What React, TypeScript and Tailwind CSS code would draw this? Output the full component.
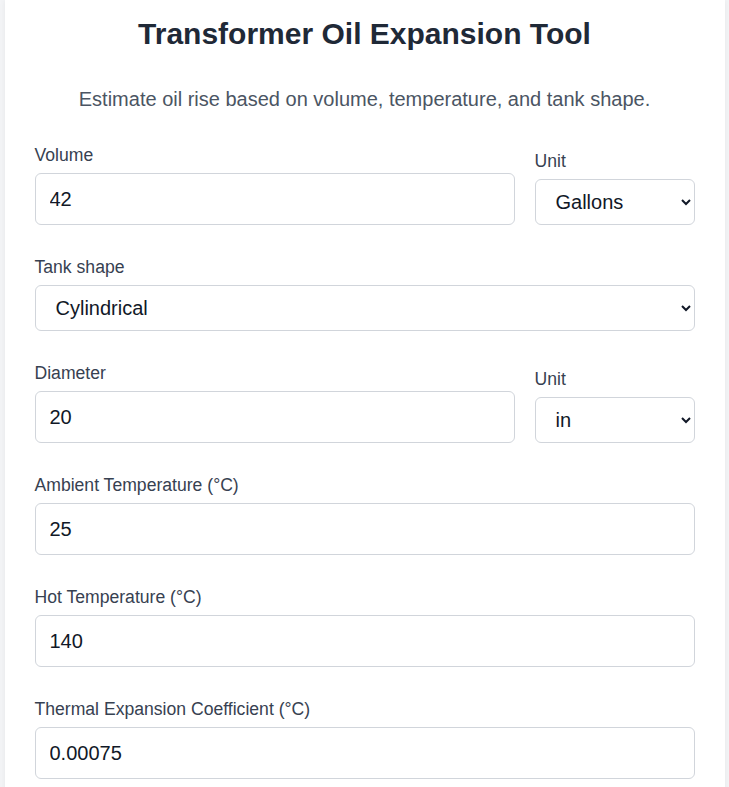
import { useState } from "react";

const inputCls =
	"w-full h-[52px] px-[14px] rounded-md border border-[#d1d5db] bg-white text-[20px] text-[#111827] outline-none";
const selectCls =
	"w-full h-[46px] pl-[16px] pr-2 rounded-md border border-[#d1d5db] bg-white text-[20px] text-[#111827] outline-none";
const labelCls = "block mb-[5px] text-[17.6px] leading-[26px] text-[#374151]";

interface FieldProps {
	label: string
	value: string
	onChange: (v: string) => void
}

const Field = ({ label, value, onChange }: FieldProps) => (
	<div>
		<label className={labelCls}>{label}</label>
		<input className={inputCls} value={value} onChange={(e) => onChange(e.target.value)} />
	</div>
)

interface UnitProps {
	value: string
	options: string[]
	onChange: (v: string) => void
}

const UnitSelect = ({ value, options, onChange }: UnitProps) => (
	<div className="w-[160px] shrink-0">
		<label className={labelCls}>Unit</label>
		<select className={selectCls} value={value} onChange={(e) => onChange(e.target.value)}>
			{options.map((o) => (
				<option key={o}>{o}</option>
			))}
		</select>
	</div>
)

export default function App() {
	const [volume, setVolume] = useState("42");
	const [volUnit, setVolUnit] = useState("Gallons");
	const [shape, setShape] = useState("Cylindrical");
	const [diameter, setDiameter] = useState("20");
	const [diaUnit, setDiaUnit] = useState("in");
	const [ambient, setAmbient] = useState("25");
	const [hot, setHot] = useState("140");
	const [coef, setCoef] = useState("0.00075");

	return (
		<div className="min-h-screen bg-[#f3f4f6] font-['Liberation_Sans',Arial,sans-serif]">
			<div className="max-w-[720px] mx-auto bg-white shadow-[0_0_6px_rgba(0,0,0,0.06)] px-[30px] pt-[11px] pb-10 min-h-screen">
				<h1 className="text-center text-[30px] leading-[45px] font-bold text-[#1f2937]">Transformer Oil Expansion Tool</h1>
				<p className="text-center text-[20px] leading-[30px] text-[#4b5563] mt-[28px]">
					Estimate oil rise based on volume, temperature, and tank shape.
				</p>

				<div className="mt-[28px] flex flex-col gap-[29px]">
					{/* volume + unit */}
					<div className="flex items-end gap-5">
						<div className="flex-1">
							<Field label="Volume" value={volume} onChange={setVolume} />
						</div>
						<UnitSelect value={volUnit} options={["Gallons", "Liters", "Cubic feet"]} onChange={setVolUnit} />
					</div>

					<div>
						<label className={labelCls}>Tank shape</label>
						<select className={selectCls} value={shape} onChange={(e) => setShape(e.target.value)}>
							<option>Cylindrical</option>
							<option>Rectangular</option>
						</select>
					</div>

					<div className="flex items-end gap-5">
						<div className="flex-1">
							<Field label="Diameter" value={diameter} onChange={setDiameter} />
						</div>
						<UnitSelect value={diaUnit} options={["in", "cm", "ft", "m"]} onChange={setDiaUnit} />
					</div>

					<Field label="Ambient Temperature (°C)" value={ambient} onChange={setAmbient} />
					<Field label="Hot Temperature (°C)" value={hot} onChange={setHot} />
					<Field label="Thermal Expansion Coefficient (°C)" value={coef} onChange={setCoef} />
				</div>
			</div>
		</div>
	)
}
